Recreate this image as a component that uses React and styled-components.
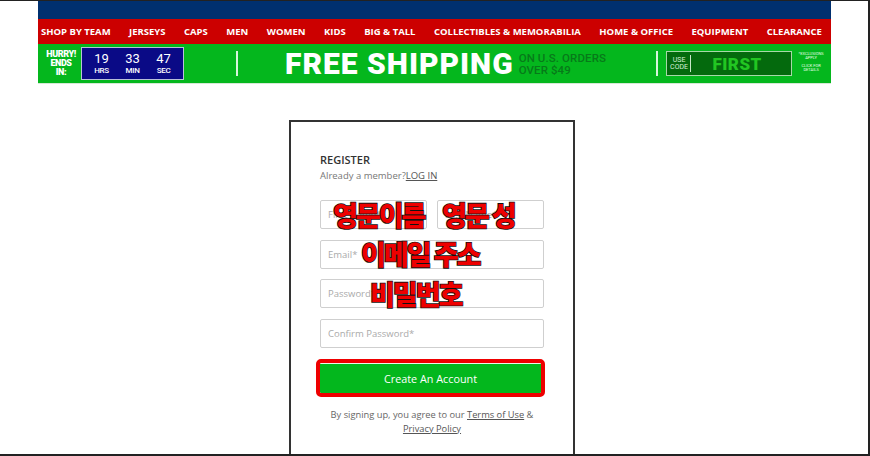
import React from "react";
import styled, { createGlobalStyle } from "styled-components";

const GlobalStyle = createGlobalStyle`
  * {
    box-sizing: border-box;
  }
  body {
    margin: 0;
    background: #fff;
    font-family: "Open Sans", "Liberation Sans", sans-serif;
  }
`;

const Frame = styled.div`
  width: 870px;
  height: 456px;
  border-top: 1px solid #222;
  border-right: 2px solid #222;
  border-bottom: 2px solid #222;
  overflow: hidden;
  background: #fff;
`;

const Header = styled.header`
  width: 793px;
  margin-left: 38px;
`;

const TopBar = styled.div`
  height: 18px;
  background: #00306f;
`;

const Nav = styled.nav`
  height: 25px;
  background: #cc0000;
  display: flex;
  align-items: center;
  justify-content: space-between;
  padding: 0 9px 0 3px;
  a {
    color: #fff;
    font-size: 9.5px;
    font-weight: 700;
    text-decoration: none;
    white-space: nowrap;
  }
`;

const Promo = styled.div`
  height: 40px;
  background: #04b71d;
  display: flex;
  align-items: center;
  padding-left: 3px;
  border-bottom: 1px solid #d6e8d6;
`;

const Hurry = styled.div`
  width: 40px;
  color: #fff;
  font-family: "Roboto", sans-serif;
  font-weight: 900;
  font-size: 9px;
  line-height: 9px;
  text-align: center;
  letter-spacing: -0.4px;
`;

const Countdown = styled.div`
  width: 103px;
  height: 33px;
  background: #0a0a86;
  border: 1px solid #b8c0d8;
  display: flex;
  justify-content: space-around;
  align-items: center;
  padding: 0 4px;
`;

const Unit = styled.div`
  display: flex;
  flex-direction: column;
  align-items: center;
  color: #fff;
  font-family: "Roboto", sans-serif;
  span {
    font-size: 13px;
    line-height: 14px;
  }
  small {
    font-size: 8px;
    line-height: 10px;
    font-weight: 500;
    letter-spacing: -0.3px;
  }
`;

const Divider = styled.div`
  width: 2px;
  height: 25px;
  background: #d8f5dc;
  margin: 0 ${(p) => p.$right || 0}px 0 ${(p) => p.$left || 0}px;
`;

const FreeShipping = styled.div`
  color: #fff;
  font-family: "Roboto", sans-serif;
  font-weight: 900;
  font-size: 30px;
  letter-spacing: 1px;
  line-height: 30px;
  white-space: nowrap;
`;

const OrderNote = styled.div`
  margin-left: 5px;
  color: #077a19;
  font-family: "Roboto", sans-serif;
  font-weight: 500;
  font-size: 11.5px;
  line-height: 12px;
  letter-spacing: 0.1px;
  white-space: nowrap;
`;

const CodeBox = styled.div`
  width: 126px;
  height: 25px;
  background: #046a0d;
  border: 1px solid #a8d8a8;
  display: flex;
  align-items: center;
  padding-left: 3px;
`;

const CodeLabel = styled.div`
  color: #d8f0d8;
  font-family: "Roboto", sans-serif;
  font-size: 7px;
  line-height: 7px;
  text-align: center;
  width: 21px;
  padding-right: 2px;
  border-right: 1px solid #c8e8c8;
  height: 17px;
  display: flex;
  flex-direction: column;
  justify-content: center;
`;

const CodeValue = styled.div`
  flex: 1;
  text-align: center;
  color: #22c622;
  font-family: "Roboto", sans-serif;
  font-weight: 900;
  font-size: 17px;
  letter-spacing: 0.5px;
  padding-right: 8px;
`;

const FinePrint = styled.div`
  margin-left: 5px;
  color: #e8ffe8;
  font-family: "Roboto", sans-serif;
  font-size: 4px;
  line-height: 4.5px;
  text-align: center;
  width: 28px;
  p {
    margin: 0 0 3px;
  }
`;

const Card = styled.section`
  width: 286px;
  margin: 36px 0 0 289px;
  border: 2px solid #333;
  border-bottom: none;
  padding: 30px 29px 40px;
  height: 400px;
`;

const Title = styled.h2`
  margin: 0;
  font-size: 11px;
  line-height: 15px;
  font-weight: 600;
  color: #333;
`;

const Member = styled.p`
  margin: 2px 0 17px;
  font-size: 9.5px;
  line-height: 14px;
  color: #777;
  a {
    color: #555;
    text-decoration: underline;
  }
`;

const Row = styled.div`
  display: flex;
  gap: 10px;
  margin-bottom: 10.5px;
`;

const Field = styled.div`
  position: relative;
  flex: 1;
`;

const Input = styled.input`
  width: 100%;
  height: 29px;
  border: 1px solid #cfcfcf;
  border-radius: 2px;
  padding: 0 7px;
  font-family: "Open Sans", sans-serif;
  font-size: 9.5px;
  color: #333;
  outline: none;
  &::placeholder {
    color: #aaa;
  }
`;

const Note = styled.span`
  position: absolute;
  top: 50%;
  left: ${(p) => p.$left}px;
  transform: translateY(-52%);
  font-family: "Noto Sans CJK KR", sans-serif;
  font-weight: 900;
  font-size: 27px;
  letter-spacing: -2px;
  line-height: 1;
  color: #ee0000;
  -webkit-text-stroke: 1.6px #111;
  paint-order: stroke fill;
  white-space: nowrap;
  pointer-events: none;
`;

const Button = styled.button`
  display: block;
  width: 221px;
  height: 30px;
  margin: 15px 0 0;
  background: #03b71d;
  border: none;
  border-top: 1px solid #e8f8e8;
  border-radius: 1px;
  outline: 4px solid #ee0000;
  color: #fff;
  font-family: "Open Sans", sans-serif;
  font-size: 10.8px;
`;

const Terms = styled.p`
  margin: 15px 0 0;
  text-align: center;
  font-size: 9.3px;
  line-height: 14px;
  color: #666;
  a {
    color: #555;
    text-decoration: underline;
  }
`;

const navItems = [
  "SHOP BY TEAM",
  "JERSEYS",
  "CAPS",
  "MEN",
  "WOMEN",
  "KIDS",
  "BIG & TALL",
  "COLLECTIBLES & MEMORABILIA",
  "HOME & OFFICE",
  "EQUIPMENT",
  "CLEARANCE",
];

const App = () => {
  return (
    <Frame>
      <GlobalStyle />
      <Header>
        <TopBar />
        <Nav>
          {navItems.map((item) => (
            <a href="#" key={item}>
              {item}
            </a>
          ))}
        </Nav>
        <Promo>
          <Hurry>
            HURRY!
            <br />
            ENDS
            <br />
            IN:
          </Hurry>
          <Countdown>
            <Unit>
              <span>19</span>
              <small>HRS</small>
            </Unit>
            <Unit>
              <span>33</span>
              <small>MIN</small>
            </Unit>
            <Unit>
              <span>47</span>
              <small>SEC</small>
            </Unit>
          </Countdown>
          <Divider $left={52} $right={47} />
          <FreeShipping>FREE SHIPPING</FreeShipping>
          <OrderNote>
            ON U.S. ORDERS
            <br />
            OVER $49
          </OrderNote>
          <Divider $left={50} $right={8} />
          <CodeBox>
            <CodeLabel>
              <div>USE</div>
              <div>CODE</div>
            </CodeLabel>
            <CodeValue>FIRST</CodeValue>
          </CodeBox>
          <FinePrint>
            <p>*EXCLUSIONS APPLY</p>
            <p>CLICK FOR DETAILS</p>
          </FinePrint>
        </Promo>
      </Header>

      <Card>
        <Title>REGISTER</Title>
        <Member>
          Already a member?<a href="#">LOG IN</a>
        </Member>
        <Row>
          <Field>
            <Input placeholder="First Name*" />
            <Note $left={13}>영문이름</Note>
          </Field>
          <Field>
            <Input placeholder="Last Name*" />
            <Note $left={5}>영문 성</Note>
          </Field>
        </Row>
        <Row>
          <Field>
            <Input placeholder="Email*" />
            <Note $left={41}>이메일 주소</Note>
          </Field>
        </Row>
        <Row>
          <Field>
            <Input placeholder="Password*" />
            <Note $left={50}>비밀번호</Note>
          </Field>
        </Row>
        <Row>
          <Field>
            <Input placeholder="Confirm Password*" />
          </Field>
        </Row>
        <Button>Create An Account</Button>
        <Terms>
          By signing up, you agree to our <a href="#">Terms of Use</a> &amp;
          <br />
          <a href="#">Privacy Policy</a>
        </Terms>
      </Card>
    </Frame>
  );
};

export default App;
